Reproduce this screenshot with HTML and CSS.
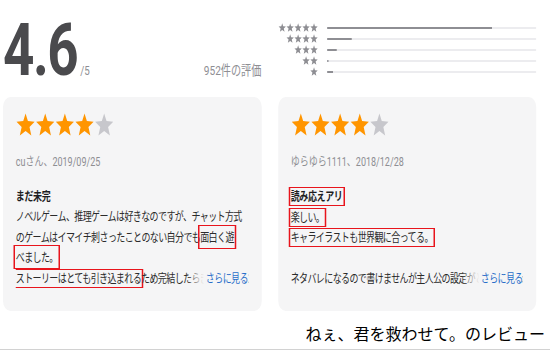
FILE: index.html
```html
<!DOCTYPE html>
<html lang="ja">
<head>
    <meta charset="UTF-8">
    <meta name="viewport" content="width=device-width, initial-scale=1.0">
    <title>評価とレビュー</title>
    <link rel="stylesheet" href="styles.css">
</head>
<body>
    <div class="page">
        <!-- 評価サマリー -->
        <div class="summary">
            <div class="score">
                <span class="score-value">4.6</span>
                <span class="score-max">/5</span>
                <span class="score-count">952件の評価</span>
            </div>
            <div class="histogram">
                <div class="hist-row">
                    <svg class="hist-stars" viewBox="0 0 130 24" preserveAspectRatio="none">
                        <defs>
                            <polygon id="star" points="13,0.5 16.1,8.4 25,9.1 18.2,14.6 20.6,23.5 13,18.9 5.4,23.5 7.8,14.6 1,9.1 9.9,8.4"/>
                        </defs>
                        <use href="#star" x="0"/><use href="#star" x="26"/><use href="#star" x="52"/><use href="#star" x="78"/><use href="#star" x="104"/>
                    </svg>
                    <div class="hist-bar"><div class="hist-fill" style="width: 79%"></div></div>
                </div>
                <div class="hist-row">
                    <svg class="hist-stars" viewBox="0 0 130 24" preserveAspectRatio="none">
                        <use href="#star" x="26"/><use href="#star" x="52"/><use href="#star" x="78"/><use href="#star" x="104"/>
                    </svg>
                    <div class="hist-bar"><div class="hist-fill" style="width: 12%"></div></div>
                </div>
                <div class="hist-row">
                    <svg class="hist-stars" viewBox="0 0 130 24" preserveAspectRatio="none">
                        <use href="#star" x="52"/><use href="#star" x="78"/><use href="#star" x="104"/>
                    </svg>
                    <div class="hist-bar"><div class="hist-fill" style="width: 5%"></div></div>
                </div>
                <div class="hist-row">
                    <svg class="hist-stars" viewBox="0 0 130 24" preserveAspectRatio="none">
                        <use href="#star" x="78"/><use href="#star" x="104"/>
                    </svg>
                    <div class="hist-bar"><div class="hist-fill" style="width: 1%"></div></div>
                </div>
                <div class="hist-row">
                    <svg class="hist-stars" viewBox="0 0 130 24" preserveAspectRatio="none">
                        <use href="#star" x="104"/>
                    </svg>
                    <div class="hist-bar"><div class="hist-fill" style="width: 3%"></div></div>
                </div>
            </div>
        </div>

        <!-- レビューカード -->
        <div class="reviews">
            <div class="review">
                <svg class="review-stars" viewBox="0 0 130 24" preserveAspectRatio="none">
                    <use class="on" href="#star" x="0"/><use class="on" href="#star" x="26"/><use class="on" href="#star" x="52"/><use class="on" href="#star" x="78"/><use class="off" href="#star" x="104"/>
                </svg>
                <div class="review-meta">cuさん、2019/09/25</div>
                <div class="review-title">まだ未完</div>
                <div class="review-body">
                    <p>ノベルゲーム、推理ゲームは好きなのですが、チャット方式<br>のゲームはイマイチ刺さったことのない自分でも<span class="mark mark-tall">面白く遊</span><br><span class="mark mark-tall">べました。</span></p>
                    <p class="review-last"><span class="mark">ストーリーはとても引き込まれる</span>ため完結したらきっともっと楽しめると思います。<span class="more">さらに見る</span></p>
                </div>
            </div>
            <div class="review">
                <svg class="review-stars" viewBox="0 0 130 24" preserveAspectRatio="none">
                    <use class="on" href="#star" x="0"/><use class="on" href="#star" x="26"/><use class="on" href="#star" x="52"/><use class="on" href="#star" x="78"/><use class="off" href="#star" x="104"/>
                </svg>
                <div class="review-meta">ゆらゆら1111、2018/12/28</div>
                <div class="review-title"><span class="mark">読み応えアリ</span></div>
                <div class="review-body">
                    <p><span class="mark">楽しい。</span><br><span class="mark">キャライラストも世界観に合ってる。</span><br><br></p>
                    <p class="review-last">ネタバレになるので書けませんが主人公の設定がとても良かったです。<span class="more">さらに見る</span></p>
                </div>
            </div>
        </div>
    </div>

    <div class="caption">ねぇ、君を救わせて。のレビュー</div>
    <div class="rule"></div>
</body>
</html>
```

FILE: styles.css
```css
/* リセット */
* {
    box-sizing: border-box;
    margin: 0;
    padding: 0;
}

html,
body {
    overflow: hidden;
}

body {
    width: 550px;
    height: 350px;
    background: #fff;
    font-family: Roboto, "Noto Sans CJK JP", sans-serif;
}

/* 横に縮めたストアのブロック */
.page {
    width: 733px;
    padding: 0 18px 0 4px;
    transform: scaleX(0.75);
    transform-origin: 0 0;
}

/* 評価サマリー */
.summary {
    display: grid;
    grid-template-columns: minmax(0, 1fr) minmax(0, 1fr);
    column-gap: 22px;
    height: 97px;
}

.score {
    display: flex;
    align-items: baseline;
    padding-top: 13.5px;
}

.score-value {
    font-size: 73px;
    font-weight: 700;
    line-height: 1;
    letter-spacing: -2px;
    color: #4a4a4d;
}

.score-max {
    margin-left: 4px;
    font-size: 13px;
    color: #8e8e93;
}

.score-count {
    margin-left: auto;
    font-size: 13.5px;
    color: #8e8e93;
}

.histogram {
    display: flex;
    flex-direction: column;
    padding-top: 22px;
}

.hist-row {
    display: flex;
    align-items: center;
    gap: 12px;
    height: 11px;
}

.hist-stars {
    display: block;
    flex-shrink: 0;
    width: 53px;
    height: 9px;
    fill: #8e8e93;
}

.hist-bar {
    flex: 1;
    height: 2px;
    border-radius: 1px;
    background: #ececef;
    overflow: hidden;
}

.hist-fill {
    height: 100%;
    background: #8e8e93;
}

/* レビューカード */
.reviews {
    display: grid;
    grid-template-columns: minmax(0, 1fr) minmax(0, 1fr);
    gap: 22px;
}

.review {
    min-width: 0;
    height: 214px;
    padding: 16px 18px 0 17px;
    border-radius: 10px;
    background: #f5f5f6;
}

.review-stars {
    display: block;
    width: 131px;
    height: 23px;
}

.review-stars .on {
    fill: #ff9500;
}

.review-stars .off {
    fill: #c7c7cc;
}

.review-meta {
    margin-top: 18px;
    font-size: 12px;
    line-height: 16px;
    color: #8e8e93;
}

.review-title {
    margin-top: 16.5px;
    font-size: 12px;
    font-weight: 700;
    line-height: 20.5px;
    letter-spacing: -0.5px;
    color: #1d1d1f;
}

.review-body {
    font-size: 12px;
    line-height: 20.5px;
    letter-spacing: -0.8px;
    color: #2b2b2b;
}

.review-last {
    position: relative;
    white-space: nowrap;
    overflow: hidden;
}

.more {
    position: absolute;
    top: 0;
    right: 0;
    padding-left: 26px;
    background: linear-gradient(to right, rgba(245, 245, 246, 0), #f5f5f6 24px);
    color: #2a6fc9;
}

/* 赤い囲み */
.mark {
    margin: 0 -3px;
    padding: 1.5px 1px;
    border: 1.5px solid #e8141c;
    border-left-width: 2px;
    border-right-width: 2px;
}

.mark-tall {
    padding: 5px 1px 3px;
}

/* 下のキャプション */
.caption {
    margin-top: 12px;
    padding-right: 5px;
    text-align: right;
    font-family: "Noto Sans CJK JP", sans-serif;
    font-size: 16px;
    line-height: 20px;
    color: #000;
}

.rule {
    margin-top: 6px;
    height: 1px;
    background: #d2d2d2;
}
```
